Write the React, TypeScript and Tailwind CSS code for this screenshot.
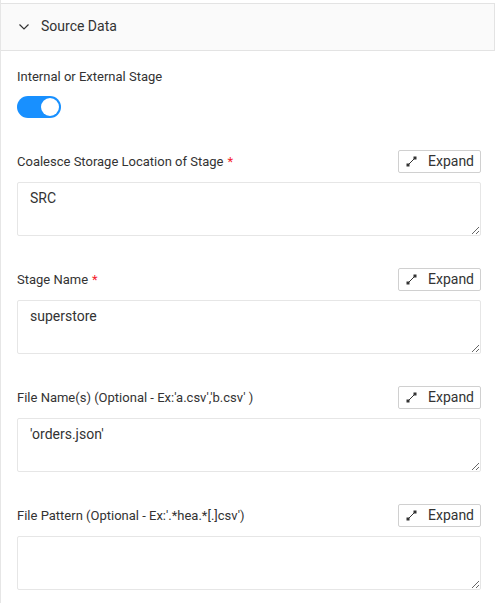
import React from "react";

const ExpandIcon = () => (
  <svg width="11" height="11" viewBox="0 0 11 11" className="shrink-0">
    <line x1="2" y1="9" x2="9" y2="2" stroke="#333" strokeWidth="1" />
    <rect x="0.5" y="7.5" width="3" height="3" fill="#333" />
    <rect x="7.5" y="0.5" width="3" height="3" fill="#333" />
  </svg>
);

const Field = ({ label, required, value }: { label: string; required?: boolean; value: string }) => (
  <div className="flex flex-col">
    <div className="flex items-center justify-between">
      <div className="text-[13px] leading-[20px] text-[#333]">
        {label}
        {required && <span className="text-[#f5222d] ml-[4px]">*</span>}
      </div>
      <button className="h-[23px] w-[83px] border border-[#d0d0d0] rounded-[2px] bg-white flex items-center pl-[7px] gap-[11px] text-[14px] text-[#333]">
        <ExpandIcon />
        <span>Expand</span>
      </button>
    </div>
    <textarea
      defaultValue={value}
      className="mt-[9px] h-[54px] w-full border border-[#e6e6e6] rounded-[2px] px-[12px] pt-[4px] text-[14px] leading-[22px] text-[#333] outline-none"
      style={{ fontFamily: "Roboto, sans-serif" }}
    />
  </div>
);

export default function App() {
  return (
    <div className="w-[495px] h-[603px] bg-white overflow-hidden" style={{ fontFamily: "Roboto, sans-serif" }}>
      <div className="pt-[3px] border-l border-[#e6e6e6] h-full">
        <div className="h-[48px] pb-[2px] bg-[#fafafa] border-t border-b border-r border-[#e3e3e3] w-[494px] flex items-center">
          <svg width="10" height="6" viewBox="0 0 10 6" className="ml-[18px] mt-[1px]">
            <polyline points="0.5,0.5 5,5 9.5,0.5" fill="none" stroke="#333" strokeWidth="1.2" />
          </svg>
          <span className="ml-[12px] text-[14px] text-[#333]">Source Data</span>
        </div>
        <div className="pl-[16px] pr-[14px] pt-[16px] flex flex-col">
          <div className="text-[13px] leading-[20px] text-[#333]">Internal or External Stage</div>
          <div className="mt-[9px] w-[44px] h-[22px] rounded-full bg-[#1890ff] relative">
            <div className="absolute right-[2px] top-[2px] w-[18px] h-[18px] rounded-full bg-white" />
          </div>
          <div className="mt-[32px] flex flex-col gap-[32px]">
            <Field label="Coalesce Storage Location of Stage" required value="SRC" />
            <Field label="Stage Name" required value="superstore" />
            <Field label="File Name(s) (Optional - Ex:'a.csv','b.csv' )" value="'orders.json'" />
            <Field label="File Pattern (Optional - Ex:'.*hea.*[.]csv')" value="" />
          </div>
        </div>
      </div>
    </div>
  );
}
